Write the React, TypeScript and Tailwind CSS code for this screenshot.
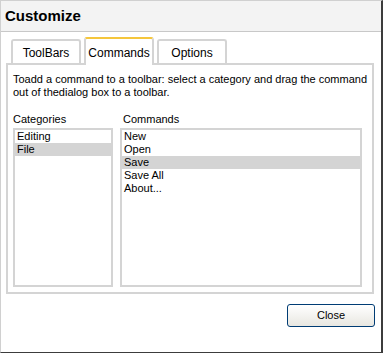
const categories = ["Editing", "File"];
const commands = ["New", "Open", "Save", "Save All", "About..."];

const tabs = [
  { name: "ToolBars", active: false },
  { name: "Commands", active: true },
  { name: "Options", active: false },
];

function ListBox({ items, selected, width }: { items: string[]; selected: string; width: string }) {
  return (
    <div className={`${width} h-[159px] border-2 border-[#d4d4d4] bg-white`}>
      {items.map((item) => (
        <div
          key={item}
          className={
            item === selected
              ? "bg-[#d4d4d4] pl-[2px] h-[13px] leading-[13px]"
              : "pl-[2px] h-[13px] leading-[13px]"
          }
        >
          {item}
        </div>
      ))}
    </div>
  );
}

export default function App() {
  return (
    <div
      className="w-[383px] h-[353px] bg-white border-l border-t border-[#d0d0d0] border-r-2 border-r-[#3c3c3c] border-b border-b-[#3c3c3c] text-black text-[11px] leading-[13px]"
      style={{ fontFamily: '"Liberation Sans", Arial, sans-serif' }}
    >
      {/* title bar */}
      <div className="h-[31px] bg-[#f3f3f3] border-b border-[#c8c8c8] pl-[4px] text-[15px] font-bold leading-[30px]">
        Customize
      </div>

      {/* tabs */}
      <div className="flex items-end gap-[3px] mt-[5px] ml-[10px]">
        {tabs.map((tab) =>
          tab.active ? (
            <div
              key={tab.name}
              className="relative z-10 w-[70px] h-[28px] -mb-[2px] bg-white border-x-2 border-x-[#d4d4d4] border-t-2 border-t-[#f5c63c] rounded-t-[3px] pt-[4px] text-center text-[12px] leading-[20px]"
            >
              {tab.name}
            </div>
          ) : (
            <div
              key={tab.name}
              className="w-[70px] h-[24px] bg-white border-2 border-b-0 border-[#d4d4d4] rounded-t-[3px] pt-[2px] text-center text-[12px] leading-[20px]"
            >
              {tab.name}
            </div>
          )
        )}
      </div>

      {/* panel */}
      <div className="ml-[5px] w-[368px] h-[231px] border-2 border-[#d4d4d4] pt-[8px] px-[5px] pb-[5px]">
        <p className="whitespace-nowrap">
          Toadd a command to a toolbar: select a category and drag the command
          <br />
          out of thedialog box to a toolbar.
        </p>
        <div className="flex gap-[7px] mt-[14px]">
          <div className="flex flex-col">
            <span className="h-[13px] mb-[2px]">Categories</span>
            <ListBox items={categories} selected="File" width="w-[100px]" />
          </div>
          <div className="flex flex-col">
            <span className="h-[13px] mb-[2px] pl-[3px]">Commands</span>
            <ListBox items={commands} selected="Save" width="w-[242px]" />
          </div>
        </div>
      </div>

      {/* footer */}
      <div className="flex justify-end mt-[10px] mr-[6px]">
        <button className="w-[88px] h-[23px] rounded-[3px] border border-[#003c74] bg-gradient-to-b from-[#ffffff] to-[#e8e7e1] text-[11px] leading-[21px] text-center">
          Close
        </button>
      </div>
    </div>
  );
}
